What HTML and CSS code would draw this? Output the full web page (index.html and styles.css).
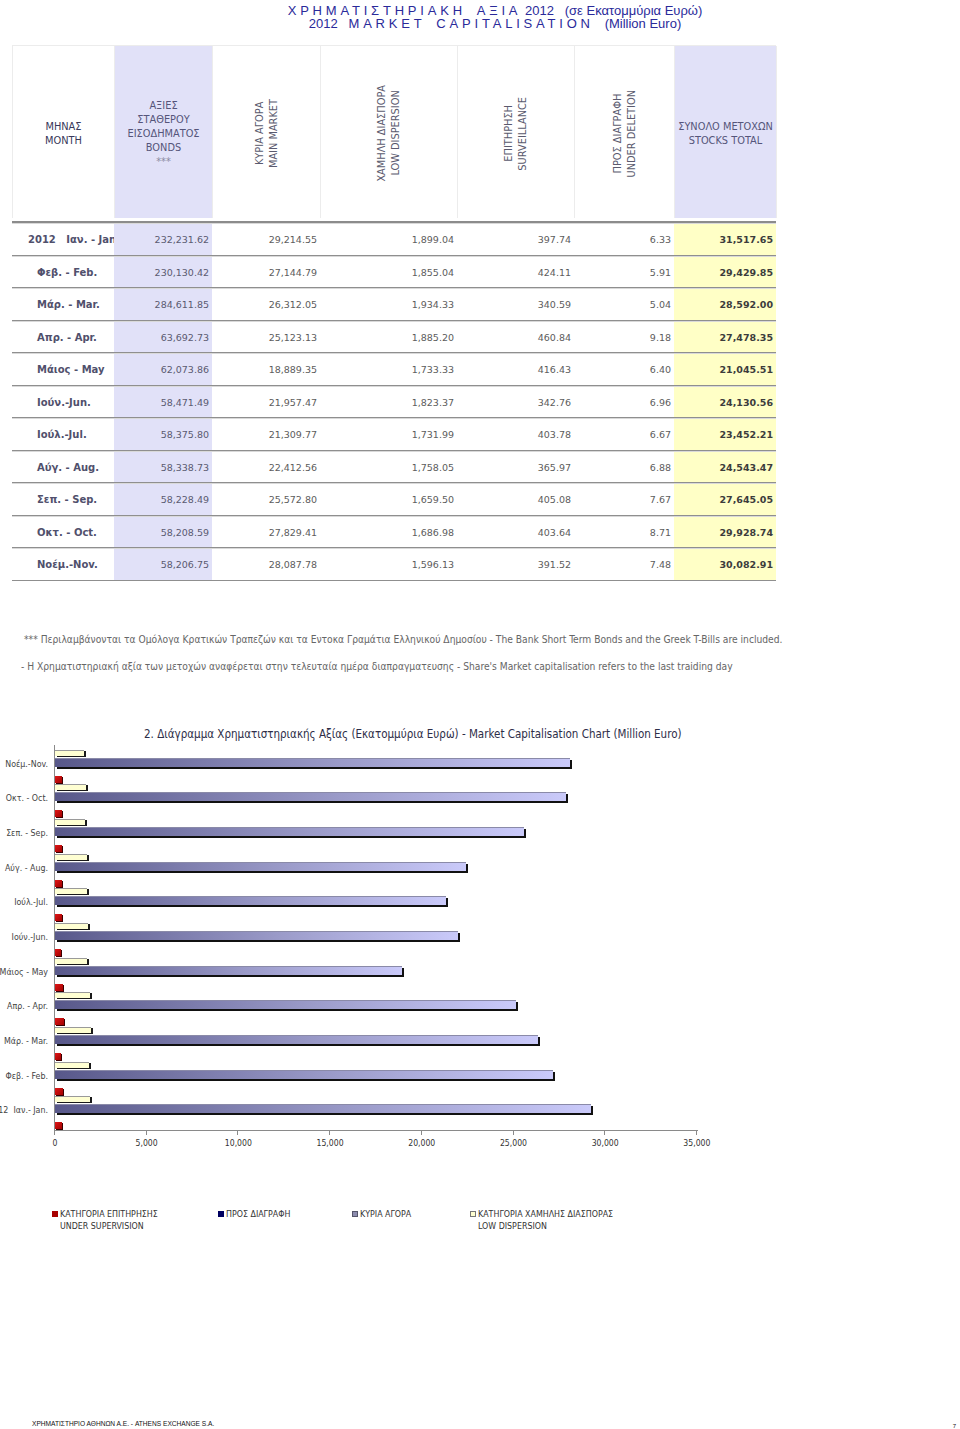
FILE: index.html
```html
<!DOCTYPE html>
<html lang="el">
<head>
<meta charset="utf-8">
<title>Market Capitalisation 2012</title>
<link rel="stylesheet" href="styles.css">
</head>
<body>
<header class="title">
  <div><span class="sp">ΧΡΗΜΑΤΙΣΤΗΡΙΑΚΗ</span> &nbsp; <span class="sp">ΑΞΙΑ</span> 2012 &nbsp; (σε Εκατομμύρια Ευρώ)</div>
  <div>2012 &nbsp; <span class="sp">MARKET</span> &nbsp; <span class="sp">CAPITALISATION</span> &nbsp; (Million Euro)</div>
</header>

<section class="table">
  <div class="thead">
    <div class="th dark"><div>ΜΗΝΑΣ<br>MONTH</div></div>
    <div class="th lav"><div>ΑΞΙΕΣ<br>ΣΤΑΘΕΡΟΥ<br>ΕΙΣΟΔΗΜΑΤΟΣ<br>BONDS<br><span class="stars">***</span></div></div>
    <div class="th"><span class="vert">ΚΥΡΙΑ ΑΓΟΡΑ<br>MAIN MARKET</span></div>
    <div class="th"><span class="vert">ΧΑΜΗΛΗ ΔΙΑΣΠΟΡΑ<br>LOW DISPERSION</span></div>
    <div class="th"><span class="vert">ΕΠΙΤΗΡΗΣΗ<br>SURVEILLANCE</span></div>
    <div class="th"><span class="vert">ΠΡΟΣ ΔΙΑΓΡΑΦΗ<br>UNDER DELETION</span></div>
    <div class="th lav"><div>ΣΥΝΟΛΟ ΜΕΤΟΧΩΝ<br>STOCKS TOTAL</div></div>
  </div>
  <div class="sep"></div>
  <div class="tr"><div class="td m first">2012 &nbsp; Ιαν. - Jan.</div><div class="td lav">232,231.62</div><div class="td">29,214.55</div><div class="td">1,899.04</div><div class="td">397.74</div><div class="td">6.33</div><div class="td tot">31,517.65</div></div>
  <div class="tr"><div class="td m">Φεβ. - Feb.</div><div class="td lav">230,130.42</div><div class="td">27,144.79</div><div class="td">1,855.04</div><div class="td">424.11</div><div class="td">5.91</div><div class="td tot">29,429.85</div></div>
  <div class="tr"><div class="td m">Μάρ. - Mar.</div><div class="td lav">284,611.85</div><div class="td">26,312.05</div><div class="td">1,934.33</div><div class="td">340.59</div><div class="td">5.04</div><div class="td tot">28,592.00</div></div>
  <div class="tr"><div class="td m">Απρ. - Apr.</div><div class="td lav">63,692.73</div><div class="td">25,123.13</div><div class="td">1,885.20</div><div class="td">460.84</div><div class="td">9.18</div><div class="td tot">27,478.35</div></div>
  <div class="tr"><div class="td m">Μάιος - May</div><div class="td lav">62,073.86</div><div class="td">18,889.35</div><div class="td">1,733.33</div><div class="td">416.43</div><div class="td">6.40</div><div class="td tot">21,045.51</div></div>
  <div class="tr"><div class="td m">Ιούν.-Jun.</div><div class="td lav">58,471.49</div><div class="td">21,957.47</div><div class="td">1,823.37</div><div class="td">342.76</div><div class="td">6.96</div><div class="td tot">24,130.56</div></div>
  <div class="tr"><div class="td m">Ιούλ.-Jul.</div><div class="td lav">58,375.80</div><div class="td">21,309.77</div><div class="td">1,731.99</div><div class="td">403.78</div><div class="td">6.67</div><div class="td tot">23,452.21</div></div>
  <div class="tr"><div class="td m">Αύγ. - Aug.</div><div class="td lav">58,338.73</div><div class="td">22,412.56</div><div class="td">1,758.05</div><div class="td">365.97</div><div class="td">6.88</div><div class="td tot">24,543.47</div></div>
  <div class="tr"><div class="td m">Σεπ. - Sep.</div><div class="td lav">58,228.49</div><div class="td">25,572.80</div><div class="td">1,659.50</div><div class="td">405.08</div><div class="td">7.67</div><div class="td tot">27,645.05</div></div>
  <div class="tr"><div class="td m">Οκτ. - Oct.</div><div class="td lav">58,208.59</div><div class="td">27,829.41</div><div class="td">1,686.98</div><div class="td">403.64</div><div class="td">8.71</div><div class="td tot">29,928.74</div></div>
  <div class="tr"><div class="td m">Νοέμ.-Nov.</div><div class="td lav">58,206.75</div><div class="td">28,087.78</div><div class="td">1,596.13</div><div class="td">391.52</div><div class="td">7.48</div><div class="td tot">30,082.91</div></div>
</section>

<p class="note n1">*** Περιλαμβάνονται τα Ομόλογα Κρατικών Τραπεζών και τα Εντοκα Γραμάτια Ελληνικού Δημοσίου - The Bank Short Term Bonds and the Greek T-Bills are included.</p>
<p class="note n2">- Η Χρηματιστηριακή αξία των μετοχών αναφέρεται στην τελευταία ημέρα διαπραγματευσης - Share's Market capitalisation refers to the last traiding day</p>

<h2 class="chart-title">2. Διάγραμμα Χρηματιστηριακής Αξίας (Εκατομμύρια Ευρώ) - Market Capitalisation Chart (Million Euro)</h2>

<section class="chart">
  <div class="chart-body">
    <div class="cats">
      <div class="cat">Νοέμ.-Nov.</div>
      <div class="cat">Οκτ. - Oct.</div>
      <div class="cat">Σεπ. - Sep.</div>
      <div class="cat">Αύγ. - Aug.</div>
      <div class="cat">Ιούλ.-Jul.</div>
      <div class="cat">Ιούν.-Jun.</div>
      <div class="cat">Μάιος - May</div>
      <div class="cat">Απρ. - Apr.</div>
      <div class="cat">Μάρ. - Mar.</div>
      <div class="cat">Φεβ. - Feb.</div>
      <div class="cat">2012 &nbsp;Ιαν.- Jan.</div>
    </div>
    <div class="plot">
      <div class="band"><div class="b-low" style="width:29.3px"></div><div class="b-main" style="width:515.2px"></div><div class="b-surv" style="width:7.2px"></div></div>
      <div class="band"><div class="b-low" style="width:30.9px"></div><div class="b-main" style="width:510.5px"></div><div class="b-surv" style="width:7.4px"></div></div>
      <div class="band"><div class="b-low" style="width:30.4px"></div><div class="b-main" style="width:469.1px"></div><div class="b-surv" style="width:7.4px"></div></div>
      <div class="band"><div class="b-low" style="width:32.2px"></div><div class="b-main" style="width:411.1px"></div><div class="b-surv" style="width:6.7px"></div></div>
      <div class="band"><div class="b-low" style="width:31.8px"></div><div class="b-main" style="width:390.9px"></div><div class="b-surv" style="width:7.4px"></div></div>
      <div class="band"><div class="b-low" style="width:33.4px"></div><div class="b-main" style="width:402.8px"></div><div class="b-surv" style="width:6.3px"></div></div>
      <div class="band"><div class="b-low" style="width:31.8px"></div><div class="b-main" style="width:346.5px"></div><div class="b-surv" style="width:7.6px"></div></div>
      <div class="band"><div class="b-low" style="width:34.6px"></div><div class="b-main" style="width:460.8px"></div><div class="b-surv" style="width:8.5px"></div></div>
      <div class="band"><div class="b-low" style="width:35.5px"></div><div class="b-main" style="width:482.6px"></div><div class="b-surv" style="width:6.2px"></div></div>
      <div class="band"><div class="b-low" style="width:34.0px"></div><div class="b-main" style="width:497.9px"></div><div class="b-surv" style="width:7.8px"></div></div>
      <div class="band"><div class="b-low" style="width:34.8px"></div><div class="b-main" style="width:535.9px"></div><div class="b-surv" style="width:7.3px"></div></div>
    </div>
  </div>
  <div class="ticks"></div>
  <div class="xlabels">
    <span>0</span><span>5,000</span><span>10,000</span><span>15,000</span><span>20,000</span><span>25,000</span><span>30,000</span><span>35,000</span>
  </div>
</section>

<ul class="legend">
  <li><i class="mk red"></i><span>ΚΑΤΗΓΟΡΙΑ ΕΠΙΤΗΡΗΣΗΣ<br>UNDER SUPERVISION</span></li>
  <li><i class="mk navy"></i><span>ΠΡΟΣ ΔΙΑΓΡΑΦΗ</span></li>
  <li><i class="mk purple"></i><span>ΚΥΡΙΑ ΑΓΟΡΑ</span></li>
  <li><i class="mk yellow"></i><span>ΚΑΤΗΓΟΡΙΑ ΧΑΜΗΛΗΣ ΔΙΑΣΠΟΡΑΣ<br>LOW DISPERSION</span></li>
</ul>

<footer class="footer">
  <span>ΧΡΗΜΑΤΙΣΤΗΡΙΟ ΑΘΗΝΩΝ Α.Ε. - ATHENS EXCHANGE S.A.</span>
  <span class="pg">7</span>
</footer>
</body>
</html>
```

FILE: styles.css
```css
* { box-sizing: border-box; }
body {
  margin: 0;
  width: 960px;
  font-family: "DejaVu Sans", Verdana, sans-serif;
  color: #555;
  background: #fff;
}

.title {
  padding: 4px 0 0 30px;
  text-align: center;
  font-family: "Liberation Sans", Arial, sans-serif;
  font-size: 13px;
  line-height: 13px;
  color: #2a2a9a;
}
.title .sp { letter-spacing: 3.8px; }

.table {
  margin: 15px 0 0 12px;
  width: 764px;
}
.thead, .tr {
  display: grid;
  grid-template-columns: 102px 98px 108px 137px 117px 100px 102px;
}
.thead {
  height: 173px;
  border-top: 1px solid #ececec;
  border-left: 1px solid #ececec;
}
.th {
  display: flex;
  align-items: center;
  justify-content: center;
  text-align: center;
  padding-top: 3px;
  border-right: 1px solid #ececec;
  font-size: 9.8px;
  line-height: 14px;
  color: #5a5a6e;
}
.th.dark { color: #38385a; }
.th.lav { background: #e1e1f8; color: #55557a; }
.th .stars { color: #8a8aa0; }
.vert {
  writing-mode: vertical-rl;
  transform: rotate(180deg);
  white-space: nowrap;
}

.sep {
  margin-top: 3px;
  height: 2px;
  background: #8c8c8c;
}
.tr {
  height: 32.5px;
  border-bottom: 1px solid #8f8f8f;
}
.td {
  display: flex;
  align-items: center;
  justify-content: flex-end;
  padding: 2px 3px 0 0;
  font-size: 9.5px;
  color: #5c5c5c;
  white-space: nowrap;
  overflow: hidden;
  box-shadow: inset 0 1px 0 #d9d9d9;
}
.td.lav { background: #e1e1f8; color: #5a5a70; }
.td.tot { background: #ffffc6; font-weight: bold; color: #3c3c3c; }
.td.m {
  justify-content: flex-start;
  padding-left: 25px;
  font-size: 10px;
  font-weight: bold;
  color: #50506c;
}
.td.m.first { padding-left: 16px; }

.note {
  margin: 0;
  font-family: "DejaVu Sans Condensed", "DejaVu Sans", sans-serif;
  font-size: 10.2px;
  line-height: 12px;
  color: #666;
  white-space: nowrap;
}
.n1 { margin-top: 53px; padding-left: 24px; }
.n2 { margin-top: 15px; padding-left: 21px; }

.chart-title {
  margin: 54px 0 0 144px;
  font-family: "DejaVu Sans Condensed", "DejaVu Sans", sans-serif;
  font-weight: normal;
  font-size: 11.5px;
  line-height: 14px;
  color: #2e2e48;
  white-space: nowrap;
}

.chart { margin-top: 4px; }
.chart-body { display: flex; }
.cats {
  width: 48px;
  padding-top: 4px;
  display: flex;
  flex-direction: column;
}
.cat {
  height: 34.7px;
  padding-top: 9px;
  display: flex;
  justify-content: flex-end;
  font-family: "DejaVu Sans Condensed", "DejaVu Sans", sans-serif;
  font-size: 8.8px;
  line-height: 12px;
  color: #444;
  white-space: nowrap;
}
.plot {
  margin-left: 6px;
  width: 644px;
  padding-top: 4px;
  border-left: 1px solid #8a8a8a;
  border-bottom: 1px solid #8a8a8a;
}
.band {
  height: 34.7px;
  display: flex;
  flex-direction: column;
  align-items: flex-start;
}
.b-low {
  margin-top: 1px;
  height: 6px;
  background: #ffffd2;
  border-top: 1px solid #9a9a9a;
  box-shadow: 2px 1px 0 #1a1a1a;
}
.b-main {
  margin-top: 2px;
  height: 9px;
  background: linear-gradient(to right, #58588a, #9a9ac8 55%, #cacafa);
  border-top: 1px solid #8a8aa8;
  box-shadow: 2px 2px 0 #111;
}
.b-surv {
  margin-top: 9px;
  height: 7px;
  background: linear-gradient(135deg, #e01818, #a00000);
  box-shadow: 1px 1px 0 #3a0000;
}
.ticks {
  margin-left: 54px;
  width: 645px;
  height: 4px;
  background: repeating-linear-gradient(to right, #8a8a8a 0 1px, transparent 1px 91.71px);
}
.xlabels {
  margin: 2px 0 0 9.1px;
  display: flex;
  font-family: "DejaVu Sans Condensed", "DejaVu Sans", sans-serif;
  font-size: 8.6px;
  line-height: 12px;
  color: #333;
}
.xlabels span {
  width: 91.71px;
  text-align: center;
  flex: none;
}

.legend {
  list-style: none;
  margin: 59px 0 0;
  padding: 0 0 0 52px;
  display: grid;
  grid-template-columns: 166px 134px 118px auto;
  font-family: "DejaVu Sans Condensed", "DejaVu Sans", sans-serif;
  font-size: 8.8px;
  line-height: 12px;
  color: #333;
}
.legend li { display: flex; align-items: flex-start; }
.mk {
  flex: none;
  width: 6px;
  height: 6px;
  margin: 3px 2px 0 0;
}
.mk.red { background: #a80000; }
.mk.navy { background: #000060; }
.mk.purple { background: #8c8cae; border: 1px solid #55556a; }
.mk.yellow { background: #ffffd0; border: 1px solid #777; }

.footer {
  margin-top: 187px;
  display: flex;
  justify-content: space-between;
  padding: 0 4px 0 32px;
  font-family: "Liberation Sans Narrow", "Liberation Sans", sans-serif;
  font-size: 6.6px;
  line-height: 10px;
  color: #111;
}
.footer .pg { font-size: 6px; padding-top: 2px; }
```
